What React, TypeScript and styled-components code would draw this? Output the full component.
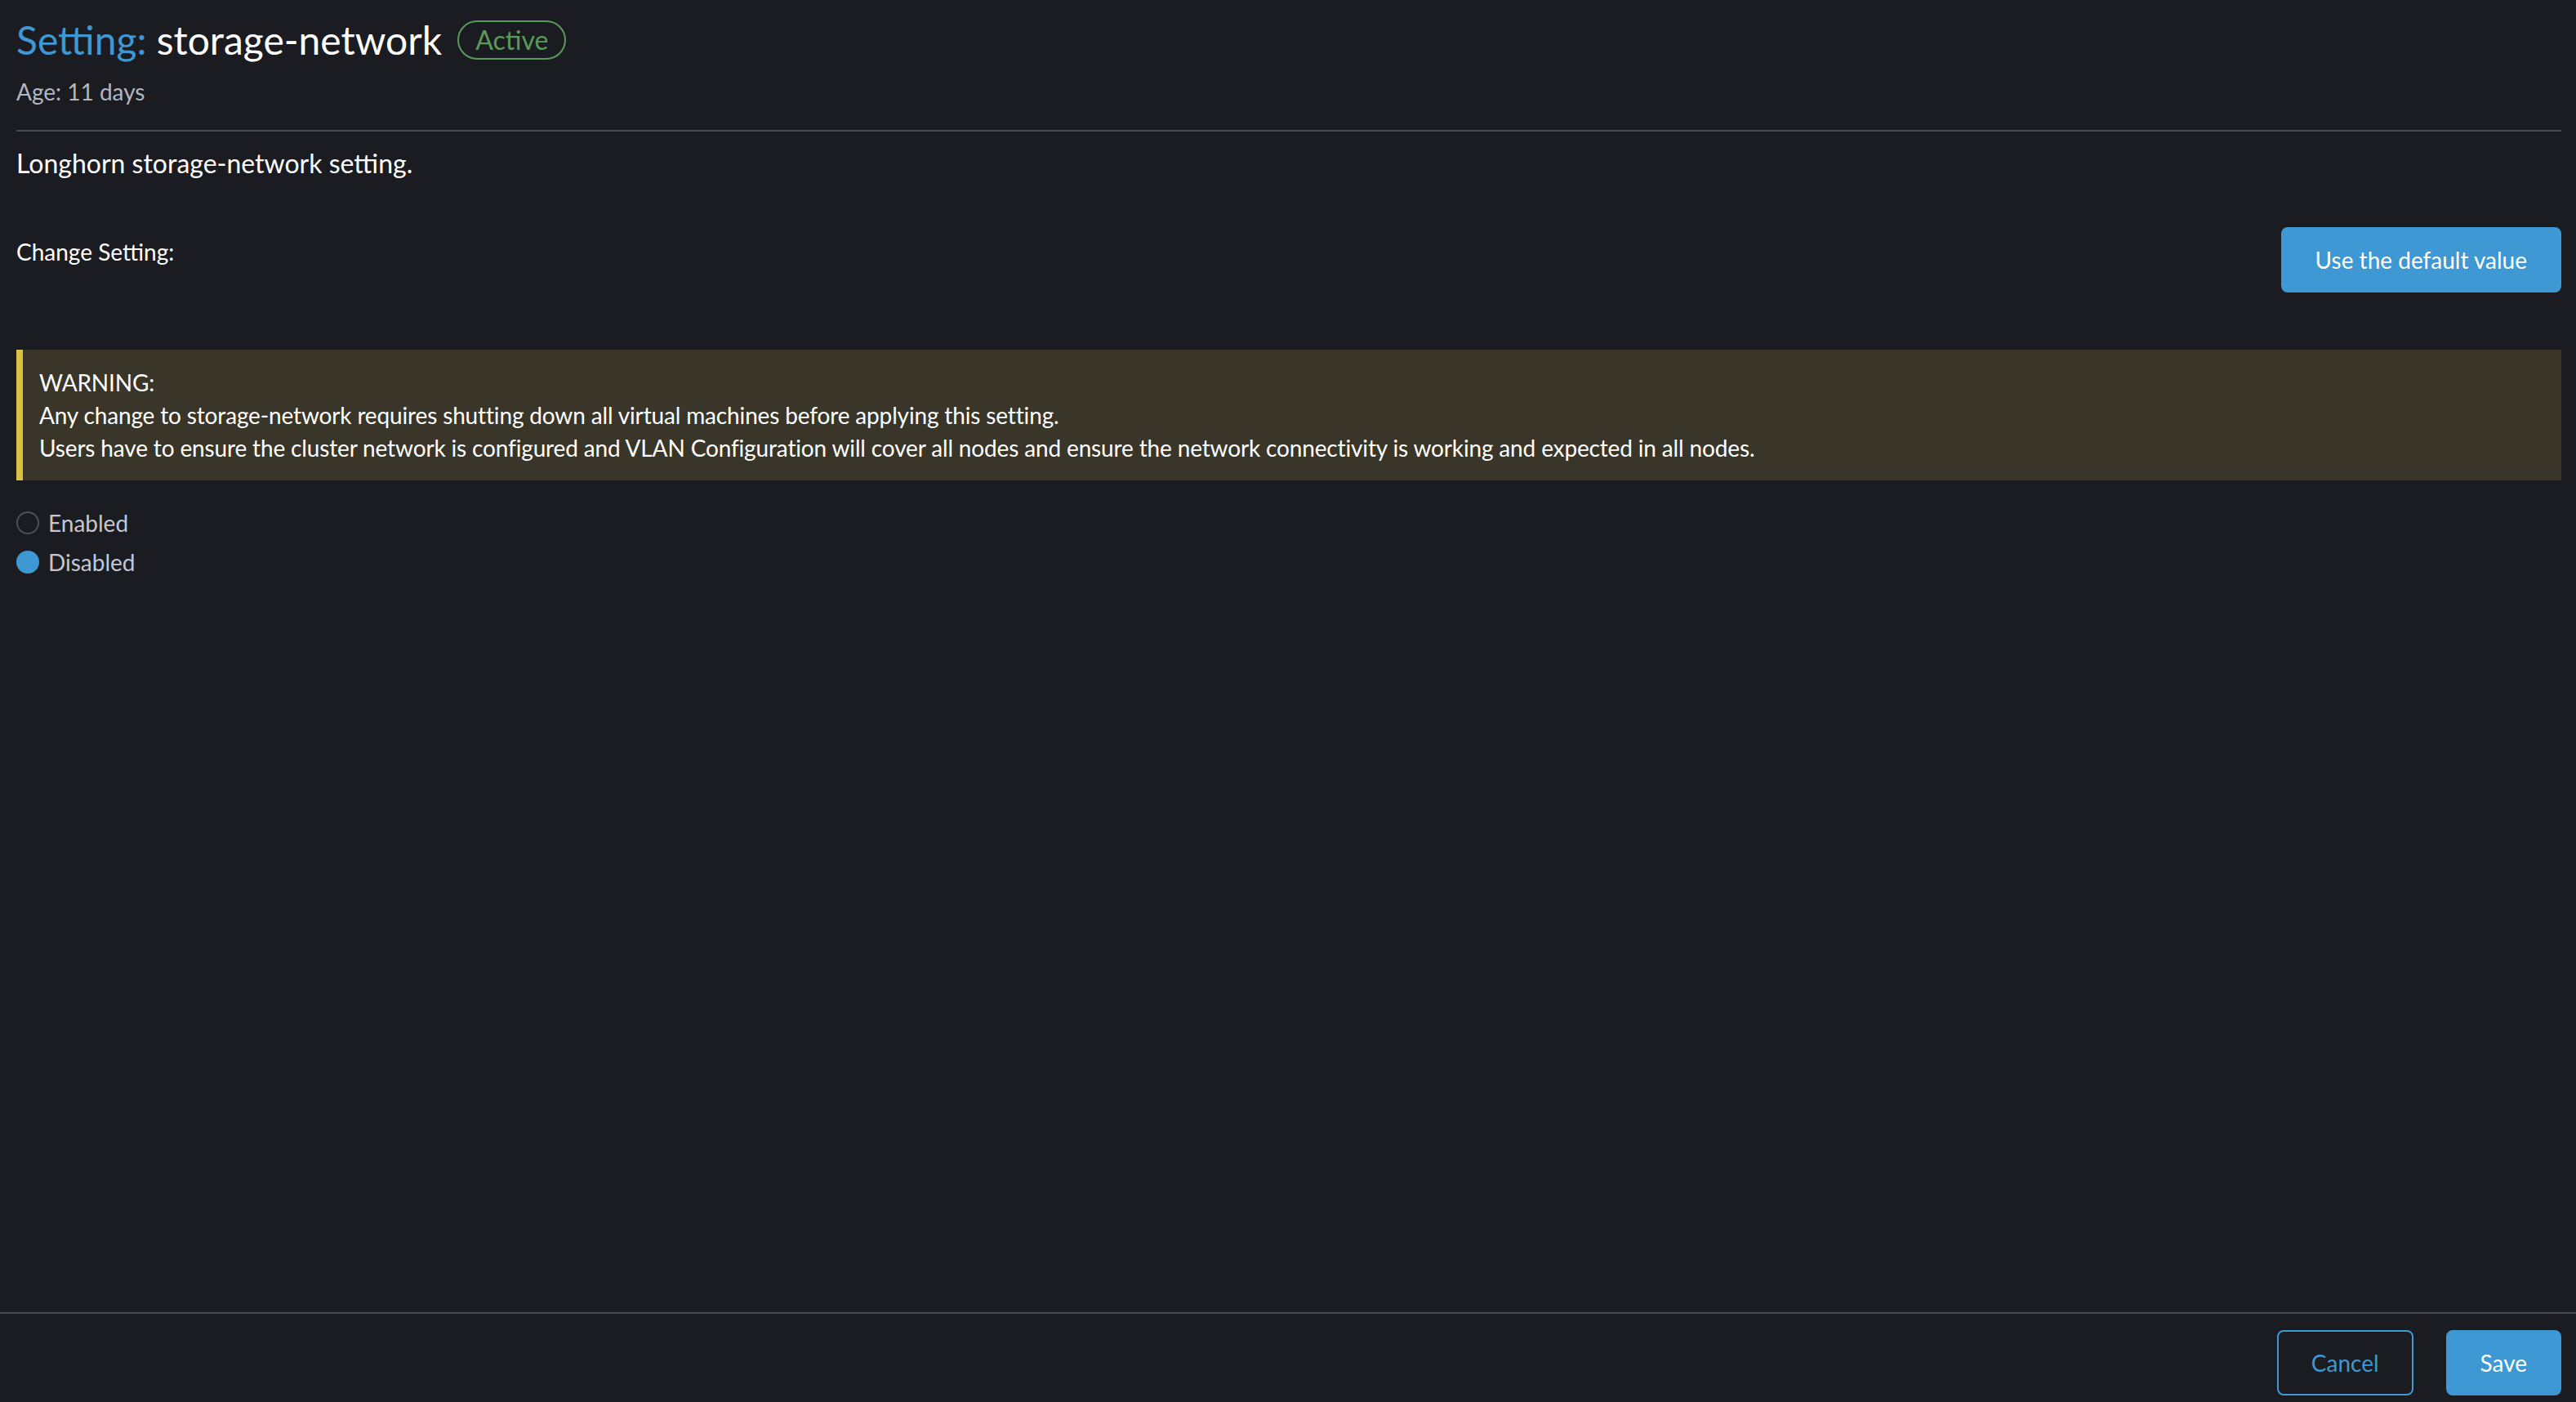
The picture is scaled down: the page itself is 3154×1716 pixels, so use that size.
import React, { useState } from "react";
import styled, { createGlobalStyle } from "styled-components";

const GlobalStyle = createGlobalStyle`
  html, body {
    margin: 0;
    padding: 0;
    background: #1b1c21;
  }
  body {
    font-family: Lato, "Noto Sans", "Liberation Sans", sans-serif;
    color: #ffffff;
  }
  * { box-sizing: border-box; }
`;

const Page = styled.div`
  height: 100vh;
  display: flex;
  flex-direction: column;
  background: #1b1c21;
  overflow: hidden;
`;

const Main = styled.main`
  flex: 1;
  min-height: 0;
  padding: 20px 18px 0 20px;
  display: flex;
  flex-direction: column;
`;

const TitleRow = styled.div`
  display: flex;
  align-items: center;
  gap: 19px;
`;

const Title = styled.h1`
  margin: 0;
  font-size: 48px;
  line-height: 58px;
  font-weight: 400;
  color: #ffffff;
`;

const TitleType = styled.span`
  color: #3d98d3;
`;

const Badge = styled.span`
  display: inline-flex;
  align-items: center;
  height: 48px;
  padding: 0 20px;
  border: 2px solid #5a9a5a;
  border-radius: 24px;
  color: #5a9a5a;
  font-size: 32px;
  line-height: 1;
`;

const Age = styled.div`
  margin-top: 14px;
  font-size: 28px;
  line-height: 40px;
  color: #b4b6c0;
`;

const Divider = styled.hr`
  margin: 27px 0 0;
  border: 0;
  height: 2px;
  background: #4a4b52;
`;

const Description = styled.p`
  margin: 19px 0 0;
  font-size: 32px;
  line-height: 40px;
  color: #ffffff;
`;

const SettingRow = styled.div`
  margin-top: 58px;
  display: flex;
  justify-content: space-between;
  align-items: flex-start;
`;

const Label = styled.div`
  margin-top: 10px;
  font-size: 28px;
  line-height: 40px;
  color: #ffffff;
`;

const Button = styled.button<{ $variant?: "primary" | "outline" }>`
  height: 80px;
  padding: 0 40px;
  border-radius: 8px;
  font-family: inherit;
  font-size: 28px;
  line-height: 1;
  cursor: pointer;
  border: 2px solid #3d98d3;
  background: ${(p) => (p.$variant === "outline" ? "transparent" : "#3d98d3")};
  color: ${(p) => (p.$variant === "outline" ? "#3d98d3" : "#ffffff")};
`;

const Warning = styled.div`
  margin-top: 70px;
  background: #393629;
  border-left: 8px solid #d9c143;
  padding: 20px 20px;
  font-size: 28px;
  line-height: 40px;
  letter-spacing: -0.15px;
  color: #ffffff;
`;

const RadioGroup = styled.div`
  margin-top: 32px;
  display: flex;
  flex-direction: column;
  gap: 8px;
`;

const RadioRow = styled.label`
  display: flex;
  align-items: center;
  gap: 11px;
  font-size: 28px;
  line-height: 40px;
  color: #c4c7d3;
  cursor: pointer;
`;

const RadioCircle = styled.span<{ $checked: boolean }>`
  width: 28px;
  height: 28px;
  border-radius: 50%;
  flex-shrink: 0;
  background: ${(p) => (p.$checked ? "#3d98d3" : "transparent")};
  border: ${(p) => (p.$checked ? "none" : "2.5px solid #4d4f57")};
`;

const Footer = styled.footer`
  flex-shrink: 0;
  border-top: 2px solid #4a4b52;
  padding: 20px 18px 8px 20px;
  display: flex;
  justify-content: flex-end;
  gap: 40px;
`;

export default function App() {
  const [value, setValue] = useState<"enabled" | "disabled">("disabled");
  return (
    <>
      <GlobalStyle />
      <Page>
        <Main>
          <TitleRow>
            <Title>
              <TitleType>Setting:</TitleType> storage-network
            </Title>
            <Badge>Active</Badge>
          </TitleRow>
          <Age>Age: 11 days</Age>
          <Divider />
          <Description>Longhorn storage-network setting.</Description>
          <SettingRow>
            <Label>Change Setting:</Label>
            <Button>Use the default value</Button>
          </SettingRow>
          <Warning>
            <div>WARNING:</div>
            <div>Any change to storage-network requires shutting down all virtual machines before applying this setting.</div>
            <div>
              Users have to ensure the cluster network is configured and VLAN Configuration will cover all nodes and ensure the network connectivity is working and expected in all nodes.
            </div>
          </Warning>
          <RadioGroup>
            <RadioRow onClick={() => setValue("enabled")}>
              <RadioCircle $checked={value === "enabled"} />
              Enabled
            </RadioRow>
            <RadioRow onClick={() => setValue("disabled")}>
              <RadioCircle $checked={value === "disabled"} />
              Disabled
            </RadioRow>
          </RadioGroup>
        </Main>
        <Footer>
          <Button $variant="outline">Cancel</Button>
          <Button>Save</Button>
        </Footer>
      </Page>
    </>
  );
}
